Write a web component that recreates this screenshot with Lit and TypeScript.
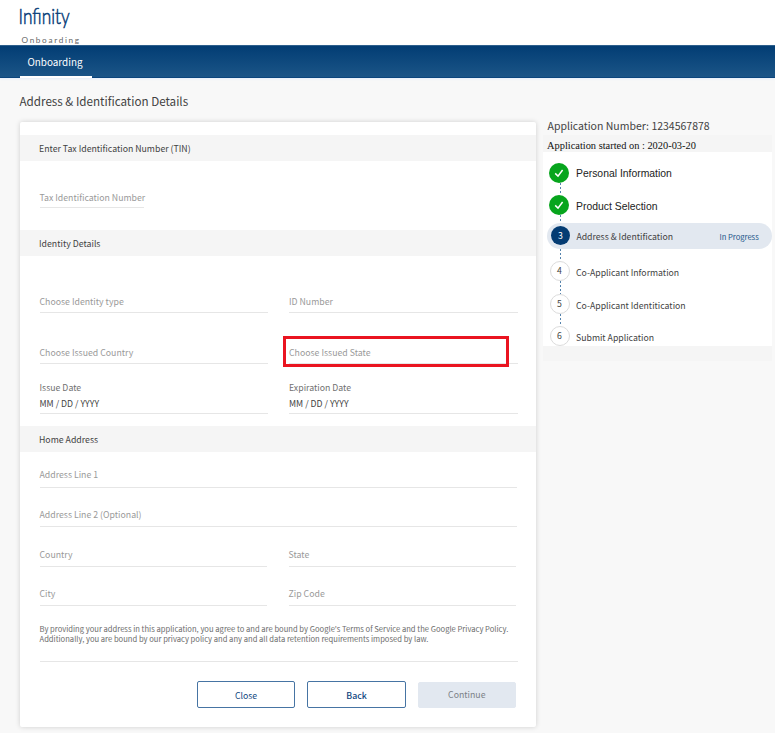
import { LitElement, html, css, nothing } from "lit";
import { customElement } from "lit/decorators.js";
import { classMap } from "lit/directives/class-map.js";

type StepState = "done" | "active" | "todo";
interface Step {
  n: number;
  label: string;
  state: StepState;
}

const STEPS: Step[] = [
  { n: 1, label: "Personal Information", state: "done" },
  { n: 2, label: "Product Selection", state: "done" },
  { n: 3, label: "Address & Identification", state: "active" },
  { n: 4, label: "Co-Applicant Information", state: "todo" },
  { n: 5, label: "Co-Applicant Identitication", state: "todo" },
  { n: 6, label: "Submit Application", state: "todo" },
];

@customElement("app-header")
class AppHeader extends LitElement {
  static styles = css`
    :host { display: block; }
    .brand { height: 45px; background: #fff; }
    .logo { display: block; }
    .name { font: 300 22.4px Lato, "Open Sans", sans-serif; fill: #0a4079; stroke: #0a4079; stroke-width: 0.6; }
    .sub { font: 400 8.2px Lato, "Open Sans", sans-serif; fill: #666; }
    nav {
      box-sizing: border-box;
      height: 33px;
      padding-left: 19.5px;
      display: flex;
      background: linear-gradient(#023d74, #1b5587);
      border-top: 1px solid #2d5f8c;
      border-bottom: 1px solid #0b457d;
      box-shadow: 0 1px 2px #e3eefb;
    }
    .tab {
      box-sizing: border-box;
      width: 72px;
      height: 32px;
      padding-left: 8px;
      border-bottom: 2px solid #fff;
      color: #fff;
      font-size: 9.9px;
      line-height: 33px;
    }
  `;
  render() {
    return html`
      <div class="brand">
        <svg class="logo" width="120" height="45" viewBox="0 0 120 45">
          <text class="name" x="18.6" y="23.7" textLength="51" lengthAdjust="spacingAndGlyphs">Infinity</text>
          <text class="sub" x="21.5" y="43" textLength="57.5" lengthAdjust="spacing">Onboarding</text>
        </svg>
      </div>
      <nav><div class="tab">Onboarding</div></nav>
    `;
  }
}

@customElement("identity-form")
class IdentityForm extends LitElement {
  static styles = css`
    :host {
      display: block;
      box-sizing: border-box;
      width: 516px;
      height: 605px;
      padding-top: 13px;
      background: #fff;
      border-radius: 2px;
      box-shadow: 0 0 5px rgba(0, 0, 0, 0.17);
      font-size: 8.75px;
      line-height: 14px;
      color: #999;
    }
    .band { height: 26px; line-height: 28px; padding-left: 19px; background: #f5f5f5; color: #424242; }
    .section { padding: 0 18.5px 0 19.5px; }
    .tin { padding-top: 29px; padding-bottom: 22px; }
    .identity { padding-top: 38px; padding-bottom: 12px; }
    .address { padding-top: 15px; }
    .row { display: grid; grid-template-columns: 228.5px 228.5px; column-gap: 21px; }
    .address .row { grid-template-columns: 227.5px 227.5px; column-gap: 21.5px; }
    .field { border-bottom: 1px solid #e6e6e6; padding: 1px 0 3px; white-space: nowrap; }
    .short { width: 104.5px; padding-bottom: 2px; }
    .issued { margin-top: 32px; }
    .dates { margin-top: 16px; }
    .date { padding-bottom: 2px; color: #707070; }
    .value { margin-top: 2px; color: #424242; }
    .line1 { padding-bottom: 5px; margin-right: 1px; }
    .line2 { margin: 20px 1px 20px 0; padding: 0 0 4px; }
    .country { padding-bottom: 4px; }
    .city { margin-top: 20px; }
    .city .field { padding: 0 0 4px; }
    .target { position: relative; }
    .mark {
      position: absolute;
      left: -6px;
      top: -9px;
      width: 219.5px;
      height: 25px;
      border: 3px solid #ea1420;
    }
    .legal {
      box-sizing: border-box;
      height: 39px;
      margin-top: 17px;
      padding-top: 0.5px;
      border-bottom: 1px solid #e6e6e6;
      font-size: 7.62px;
      line-height: 10.3px;
      color: #6c6c6c;
      white-space: nowrap;
    }
    .actions { display: flex; justify-content: flex-end; align-items: center; gap: 12px; margin-top: 19px; padding-right: 1.7px; }
    .btn {
      box-sizing: border-box;
      width: 98.5px;
      height: 27px;
      border: 1px solid #4674a3;
      border-radius: 2px;
      line-height: 27px;
      text-align: center;
      color: #0e4680;
    }
    .btn.back { font-weight: 500; }
    .btn.off { height: 26px; width: 98px; border-color: #e2e8f0; background: #e2e8f0; color: #7b7f86; line-height: 23px; }
  `;
  render() {
    return html`
      <div class="band">Enter Tax Identification Number (TIN)</div>
      <div class="section tin"><div class="field short">Tax Identification Number</div></div>
      <div class="band">Identity Details</div>
      <div class="section identity">
        <div class="row">
          <div class="field">Choose Identity type</div>
          <div class="field">ID Number</div>
        </div>
        <div class="row issued">
          <div class="field">Choose Issued Country</div>
          <div class="field target">Choose Issued State<span class="mark"></span></div>
        </div>
        <div class="row dates">
          ${["Issue Date", "Expiration Date"].map(
            (label) => html`<div class="field date">${label}<div class="value">MM / DD / YYYY</div></div>`
          )}
        </div>
      </div>
      <div class="band">Home Address</div>
      <div class="section address">
        <div class="field line1">Address Line 1</div>
        <div class="field line2">Address Line 2 (Optional)</div>
        <div class="row">
          <div class="field country">Country</div>
          <div class="field country">State</div>
        </div>
        <div class="row city">
          <div class="field">City</div>
          <div class="field">Zip Code</div>
        </div>
        <div class="legal">
          By providing your address in this application, you agree to and are bound by Google's Terms of Service and the Google Privacy Policy.<br />
          Additionally, you are bound by our privacy policy and any and all data retention requirements imposed by law.
        </div>
        <div class="actions">
          <div class="btn">Close</div>
          <div class="btn back">Back</div>
          <div class="btn off">Continue</div>
        </div>
      </div>
    `;
  }
}

@customElement("progress-panel")
class ProgressPanel extends LitElement {
  static styles = css`
    :host { display: block; width: 229px; color: #424242; }
    .number { padding-left: 4.5px; height: 18px; line-height: 18px; font-size: 10.5px; }
    .panel { background: #f5f5f5; padding-bottom: 15px; }
    .started {
      height: 17px;
      line-height: 21px;
      padding-left: 4px;
      font-family: "Liberation Serif", serif;
      font-size: 10.4px;
      color: #111;
    }
    .steps { background: #fff; padding-top: 11px; }
    .step { display: flex; align-items: center; height: 20px; padding-left: 6.5px; font-size: 8.73px; white-space: nowrap; }
    .dot {
      box-sizing: border-box;
      flex: none;
      width: 20px;
      height: 20px;
      border-radius: 50%;
      text-align: center;
    }
    .done .dot { background: #07a51d; }
    .done .text { font-family: "Liberation Sans", sans-serif; font-size: 10.4px; color: #222; padding-top: 2px; }
    .done { padding-left: 6px; }
    .done .text { margin-left: 7px; }
    .todo .dot { border: 1px solid #dcdcdc; line-height: 18px; }
    .todo .text { margin-left: 6.5px; padding-top: 3px; }
    .active {
      box-sizing: border-box;
      height: 26px;
      margin-left: 4px;
      padding: 0 13.3px 0 4px;
      border-radius: 13px;
      background: #e2e8f0;
    }
    .active .dot { width: 19px; height: 19px; background: #043c73; color: #fff; line-height: 20px; }
    .active .text { margin-left: 6.4px; padding-top: 2px; }
    .status { margin-left: auto; padding-top: 1px; font-size: 7.6px; color: #1d5689; }
    .link {
      height: 12.5px;
      width: 1px;
      margin-left: 17px;
      background: repeating-linear-gradient(#5583ad 0 2.5px, transparent 2.5px 4px);
    }
    .link.near { height: 7.5px; }
    .tick { display: block; }
  `;
  render() {
    return html`
      <div class="number">Application Number: 1234567878</div>
      <div class="panel">
        <div class="started">Application started on : 2020-03-20</div>
        <div class="steps">
          ${STEPS.map(
            (s) => html`
              ${s.n > 1 ? html`<div class=${classMap({ link: true, near: s.state === "active" })}></div>` : nothing}
              <div class="step ${s.state}">
                <span class="dot">${s.state === "done"
                  ? html`<svg class="tick" width="20" height="20" viewBox="0 0 20 20">
                      <path d="M6.2 10.4L9 13.1L13.6 7" fill="none" stroke="#fff" stroke-width="1.5" />
                    </svg>`
                  : s.n}</span>
                <span class="text">${s.label}</span>
                ${s.state === "active" ? html`<span class="status">In Progress</span>` : nothing}
              </div>
            `
          )}
        </div>
      </div>
    `;
  }
}

@customElement("app-root")
class AppRoot extends LitElement {
  static styles = css`
    :host {
      display: block;
      height: 733px;
      overflow: hidden;
      background: #f8f8f8;
      font-family: "Noto Sans CJK SC", "Noto Sans", sans-serif;
    }
    main { display: flex; gap: 7px; padding-left: 20px; }
    h1 {
      margin: 0;
      height: 44px;
      line-height: 46px;
      font-size: 11.65px;
      font-weight: 400;
      color: #424242;
      margin-left: -0.5px;
    }
    .side { padding-top: 38.5px; }
  `;
  render() {
    return html`
      <app-header></app-header>
      <main>
        <div><h1>Address &amp; Identification Details</h1><identity-form></identity-form></div>
        <div class="side"><progress-panel></progress-panel></div>
      </main>
    `;
  }
}
